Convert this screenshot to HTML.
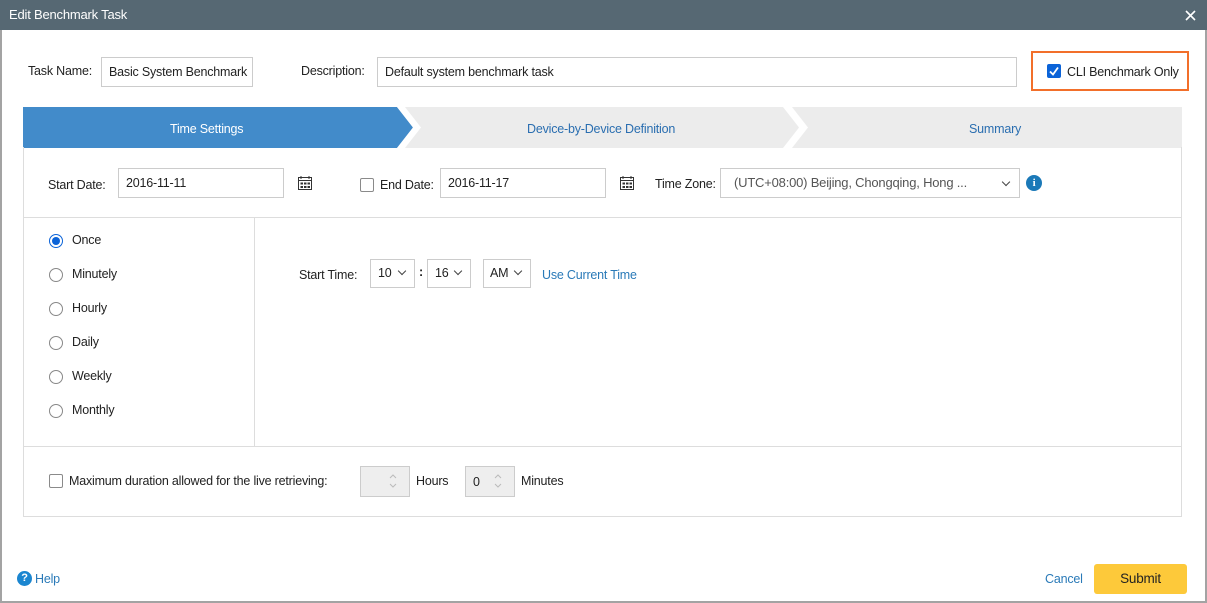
<!DOCTYPE html>
<html><head><meta charset="utf-8"><style>
*{box-sizing:border-box;margin:0;padding:0}
body{width:1207px;height:603px;position:relative;background:#fff;font-family:"Liberation Sans",sans-serif;font-size:12.5px;letter-spacing:-0.2px;color:#222;overflow:hidden}
.a{position:absolute;white-space:nowrap}
.box{position:absolute;border:1px solid #ccc;background:#fff}
.lbl{position:absolute;line-height:16px;white-space:nowrap}
.radio{position:absolute;width:14px;height:14px;border:1px solid #888;border-radius:50%;background:#fff}
.cb{position:absolute;width:14px;height:14px;border:1px solid #8a8a8a;border-radius:2px;background:#fff}
.chev{position:absolute;width:6px;height:6px;border-right:1.2px solid #444;border-bottom:1.2px solid #444;transform:rotate(45deg)}
</style></head><body>
<div class="a" style="left:0;top:0;width:1207px;height:603px;border:2px solid #a3a3a3;border-top:none"></div>
<div class="a" style="left:0;top:0;width:1207px;height:30px;background:#566873"></div>
<div class="lbl" style="left:9px;top:7px;color:#fff;font-size:13px">Edit Benchmark Task</div>
<svg class="a" style="left:1185px;top:10px" width="11" height="11"><path d="M1 1L10 10M10 1L1 10" stroke="#fff" stroke-width="1.6"/></svg>

<div class="lbl" style="left:28px;top:63px">Task Name:</div>
<div class="box" style="left:101px;top:57px;width:152px;height:30px"></div>
<div class="lbl" style="left:109px;top:64px">Basic System Benchmark</div>
<div class="lbl" style="left:301px;top:63px">Description:</div>
<div class="box" style="left:377px;top:57px;width:640px;height:30px"></div>
<div class="lbl" style="left:385px;top:64px">Default system benchmark task</div>
<div class="a" style="left:1031px;top:51px;width:158px;height:40px;border:2px solid #f26f2a"></div>
<div class="a" style="left:1047px;top:64px;width:14px;height:14px;background:#0b63d8;border-radius:2px"></div>
<svg class="a" style="left:1047px;top:64px" width="14" height="14"><path d="M3 7.5L6 10.5L11 3.5" stroke="#fff" stroke-width="1.8" fill="none"/></svg>
<div class="lbl" style="left:1067px;top:64px">CLI Benchmark Only</div>

<svg class="a" style="left:23px;top:107px" width="1159" height="41">
<rect x="0" y="0" width="1159" height="41" fill="#ececec"/>
<path d="M0 0H374L390 20.5L374 41H0Z" fill="#428bca"/>
<path d="M374 0H382L398 20.5L382 41H374L390 20.5Z" fill="#fff"/>
<path d="M760 0L776 20.5L760 41H769L785 20.5L769 0Z" fill="#fff"/>
</svg>
<div class="lbl" style="left:170px;top:121px;color:#fff">Time Settings</div>
<div class="lbl" style="left:527px;top:121px;color:#2a6eb0">Device-by-Device Definition</div>
<div class="lbl" style="left:969px;top:121px;color:#2a6eb0">Summary</div>

<div class="a" style="left:23px;top:147px;width:1159px;height:370px;border:1px solid #ddd;border-top:none"></div>
<div class="lbl" style="left:48px;top:177px">Start Date:</div>
<div class="box" style="left:118px;top:168px;width:166px;height:30px"></div>
<div class="lbl" style="left:126px;top:175px">2016-11-11</div>
<svg class="a" style="left:297px;top:175px" width="16" height="16"><g fill="none" stroke="#333"><rect x="1.5" y="2.5" width="13" height="12"/><path d="M4 1v3M12 1v3M1.5 5.5h13"/></g><g fill="#333"><rect x="3.5" y="7.5" width="2.5" height="2"/><rect x="7" y="7.5" width="2.5" height="2"/><rect x="10.5" y="7.5" width="2.5" height="2"/><rect x="3.5" y="11" width="2.5" height="2"/><rect x="7" y="11" width="2.5" height="2"/><rect x="10.5" y="11" width="2.5" height="2"/></g></svg>
<div class="cb" style="left:360px;top:178px"></div>
<div class="lbl" style="left:380px;top:177px">End Date:</div>
<div class="box" style="left:440px;top:168px;width:166px;height:30px"></div>
<div class="lbl" style="left:448px;top:175px">2016-11-17</div>
<svg class="a" style="left:619px;top:175px" width="16" height="16"><g fill="none" stroke="#333"><rect x="1.5" y="2.5" width="13" height="12"/><path d="M4 1v3M12 1v3M1.5 5.5h13"/></g><g fill="#333"><rect x="3.5" y="7.5" width="2.5" height="2"/><rect x="7" y="7.5" width="2.5" height="2"/><rect x="10.5" y="7.5" width="2.5" height="2"/><rect x="3.5" y="11" width="2.5" height="2"/><rect x="7" y="11" width="2.5" height="2"/><rect x="10.5" y="11" width="2.5" height="2"/></g></svg>
<div class="lbl" style="left:655px;top:176px">Time Zone:</div>
<div class="box" style="left:720px;top:168px;width:300px;height:30px"></div>
<div class="lbl" style="left:734px;top:175px;color:#555;font-size:13px">(UTC+08:00) Beijing, Chongqing, Hong ...</div>
<div class="chev" style="left:1003px;top:179px"></div>
<div class="a" style="left:1026px;top:175px;width:16px;height:16px;border-radius:50%;background:#1b79b8;color:#fff;font-weight:bold;font-size:11px;text-align:center;line-height:16px;font-family:'Liberation Serif',serif">i</div>

<div class="a" style="left:24px;top:217px;width:1157px;height:1px;background:#ddd"></div>
<div class="a" style="left:254px;top:217px;width:1px;height:229px;background:#ddd"></div>
<div class="a" style="left:24px;top:446px;width:1157px;height:1px;background:#ddd"></div>

<div class="radio" style="left:49px;top:234px;border-color:#0b63d8"></div>
<div class="a" style="left:52px;top:237px;width:8px;height:8px;border-radius:50%;background:#0b63d8"></div>
<div class="lbl" style="left:72px;top:232px">Once</div>
<div class="radio" style="left:49px;top:268px"></div><div class="lbl" style="left:72px;top:266px">Minutely</div>
<div class="radio" style="left:49px;top:302px"></div><div class="lbl" style="left:72px;top:300px">Hourly</div>
<div class="radio" style="left:49px;top:336px"></div><div class="lbl" style="left:72px;top:334px">Daily</div>
<div class="radio" style="left:49px;top:370px"></div><div class="lbl" style="left:72px;top:368px">Weekly</div>
<div class="radio" style="left:49px;top:404px"></div><div class="lbl" style="left:72px;top:402px">Monthly</div>

<div class="lbl" style="left:299px;top:267px">Start Time:</div>
<div class="box" style="left:370px;top:259px;width:45px;height:29px"></div>
<div class="lbl" style="left:378px;top:265px">10</div><div class="chev" style="left:399px;top:268px"></div>
<div class="lbl" style="left:419px;top:264px;font-weight:bold">:</div>
<div class="box" style="left:427px;top:259px;width:44px;height:29px"></div>
<div class="lbl" style="left:435px;top:265px">16</div><div class="chev" style="left:455px;top:268px"></div>
<div class="box" style="left:483px;top:259px;width:48px;height:29px"></div>
<div class="lbl" style="left:490px;top:265px">AM</div><div class="chev" style="left:515px;top:268px"></div>
<div class="lbl" style="left:542px;top:267px;color:#2a7ab8">Use Current Time</div>

<div class="cb" style="left:49px;top:474px"></div>
<div class="lbl" style="left:69px;top:473px">Maximum duration allowed for the live retrieving:</div>
<div class="a" style="left:360px;top:466px;width:50px;height:31px;border:1px solid #ccc;background:#eee"></div>
<svg class="a" style="left:387px;top:472px" width="12" height="18"><path d="M3 6L6 3L9 6M3 12L6 15L9 12" stroke="#bbb" fill="none"/></svg>
<div class="lbl" style="left:416px;top:473px">Hours</div>
<div class="a" style="left:465px;top:466px;width:50px;height:31px;border:1px solid #ccc;background:#eee"></div>
<div class="lbl" style="left:473px;top:474px">0</div>
<svg class="a" style="left:492px;top:472px" width="12" height="18"><path d="M3 6L6 3L9 6M3 12L6 15L9 12" stroke="#bbb" fill="none"/></svg>
<div class="lbl" style="left:521px;top:473px">Minutes</div>

<div class="a" style="left:17px;top:571px;width:15px;height:15px;border-radius:50%;background:#1b86d0;color:#fff;font-weight:bold;font-size:11px;text-align:center;line-height:15px">?</div>
<div class="lbl" style="left:35px;top:571px;color:#2a7ab8">Help</div>
<div class="lbl" style="left:1045px;top:571px;color:#2a7ab8">Cancel</div>
<div class="a" style="left:1094px;top:564px;width:93px;height:30px;background:#fdc93a;border-radius:3px;text-align:center;line-height:30px;font-size:13.5px;color:#222">Submit</div>
</body></html>
